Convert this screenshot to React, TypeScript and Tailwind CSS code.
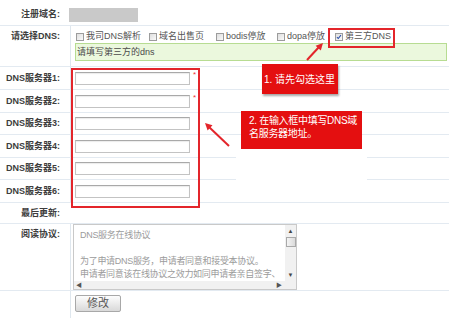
import type { ReactNode } from 'react';

const SEP = 'border-b border-[#e3eaf1]';

function Label({ children, className = '' }: { children: ReactNode; className?: string }) {
  return (
    <div className={`w-[70px] shrink-0 pr-[10px] text-right font-bold leading-[13px] text-[#3d3d3d] ${className}`}>
      {children}
    </div>
  );
}

function Checkbox({ checked = false }: { checked?: boolean }) {
  return (
    <span className="relative mr-[2px] inline-block h-[8px] w-[8px] shrink-0 border border-[#9c9c9c] bg-gradient-to-br from-[#dedede] to-[#fafafa]">
      {checked && (
        <svg viewBox="0 0 8 8" className="absolute left-0 top-0 h-[6px] w-[6px]">
          <path d="M1.2 4.2 L3 6 L6.6 1.6" fill="none" stroke="#2a4fa8" strokeWidth="1.4" />
        </svg>
      )}
    </span>
  );
}

const options = [
  { text: '我司DNS解析', w: 'w-[73px]' },
  { text: '域名出售页', w: 'w-[67px]' },
  { text: 'bodis停放', w: 'w-[61px]' },
  { text: 'dopa停放', w: 'w-[58px]' },
  { text: '第三方DNS', w: 'w-[60px]', checked: true },
];

const dnsRows = [
  { n: 1, h: 'h-[23px]', required: true },
  { n: 2, h: 'h-[23px]', required: true },
  { n: 3, h: 'h-[22px]' },
  { n: 4, h: 'h-[23px]' },
  { n: 5, h: 'h-[22px]' },
  { n: 6, h: 'h-[23px]' },
];

export default function App() {
  return (
    <div className="relative h-[330px] w-[468px] overflow-hidden bg-white font-['Liberation_Sans','Noto_Sans_CJK_SC',sans-serif] text-[9px] text-[#555]">
      <div className="w-[449px]">
        {/* 注册域名 */}
        <div className={`flex h-[26px] ${SEP}`}>
          <Label className="pt-[8px]">注册域名:</Label>
          <div className="pt-[8px]">
            <div className="-ml-px h-[14px] w-[69px] bg-[#c9c9c9]" />
          </div>
        </div>

        {/* 请选择DNS */}
        <div className={`flex h-[41px] ${SEP}`}>
          <Label className="pt-[4px]">请选择DNS:</Label>
          <div className="flex-1 border-l border-[#dfe7ee] pl-[4px] pr-[2px] pt-[4px]">
            <div className="flex h-[13px] items-center pl-[1px]">
              {options.map((o) => (
                <div key={o.text} className={`flex items-center ${o.w}`}>
                  <Checkbox checked={o.checked} />
                  <span className="whitespace-nowrap">{o.text}</span>
                </div>
              ))}
            </div>
            <div className="h-[18px] border border-[#b7dc92] bg-[#ebf8dd] pl-[1px] leading-[16px] text-[#4a4a4a]">
              请填写第三方的dns
            </div>
          </div>
        </div>

        {/* DNS服务器 */}
        {dnsRows.map((r) => (
          <div key={r.n} className={`flex items-center ${r.h} ${SEP}`}>
            <Label>DNS服务器{r.n}:</Label>
            <div className="flex h-full flex-1 items-center border-l border-[#dfe7ee] pl-[4px]">
              <div className="h-[13px] w-[115px] border border-[#c3c3c3] border-t-[#a9a9a9] bg-white shadow-[inset_0_1px_1px_rgba(0,0,0,0.08)]" />
              {r.required && <span className="mb-[6px] ml-[3px] text-[8px] text-[#e33]">*</span>}
            </div>
          </div>
        ))}

        {/* 最后更新 */}
        <div className={`flex h-[21px] items-center ${SEP}`}>
          <Label>最后更新:</Label>
        </div>

        {/* 阅读协议 */}
        <div className={`flex h-[67px] ${SEP}`}>
          <Label className="pt-[4px]">阅读协议:</Label>
          <div className="flex-1 border-l border-[#dfe7ee] pl-[2px]">
            <div className="relative h-[66px] w-[224px] overflow-hidden border border-[#c9c9c9] bg-white">
              <div className="w-[210px] overflow-hidden whitespace-nowrap pl-[6px] pt-[4px] leading-[13px] tracking-[-0.3px] text-[#9b9b9b]">
                <div>DNS服务在线协议</div>
                <div>&nbsp;</div>
                <div>为了申请DNS服务，申请者同意和接受本协议。</div>
                <div>申请者同意该在线协议之效力如同申请者亲自签字、</div>
              </div>
              {/* vertical scrollbar */}
              <div className="absolute bottom-[8px] right-0 top-0 flex w-[11px] flex-col items-center bg-[#f1f1f1]">
                <span className="mt-[3px] text-[6px] leading-[6px] text-[#444]">▲</span>
                <div className="mt-[3px] h-[10px] w-[10px] border border-[#a9a9a9] bg-gradient-to-r from-[#f4f4f4] to-[#dadada]" />
                <span className="mt-auto mb-[3px] text-[6px] leading-[6px] text-[#444]">▼</span>
              </div>
              {/* horizontal scrollbar */}
              <div className="absolute bottom-0 left-0 right-0 flex h-[8px] items-center justify-between bg-[#f1f1f1] pl-[2px] pr-[14px] text-[6px] leading-[6px] text-[#555]">
                <span>◀</span>
                <span>▶</span>
              </div>
            </div>
          </div>
        </div>

        {/* 修改 */}
        <div className="flex h-[27px]">
          <Label />
          <div className="flex-1 border-l border-[#dfe7ee] pl-[4px] pt-[4px]">
            <button
              type="button"
              className="h-[17px] w-[46px] rounded-[2px] border border-[#a8a8a8] bg-gradient-to-b from-[#fdfdfd] to-[#d9d9d9] text-[11px] leading-none text-[#555]"
            >
              修改
            </button>
          </div>
        </div>
      </div>

      {/* annotations */}
      <div className="absolute left-[71px] top-[68px] h-[140px] w-[129px] border-2 border-[#e3252b]" />
      <div className="absolute left-[328px] top-[28px] h-[20px] w-[67px] border-2 border-[#e3252b]" />
      <div className="absolute left-[236px] top-[150px] h-[31px] w-[131px] bg-white" />

      <div className="absolute left-[262px] top-[64px] flex h-[30px] w-[76px] items-center bg-[#e40f10] pl-[2px] text-[10px] text-white shadow-[1px_2px_2px_rgba(0,0,0,0.35)]">
        1. 请先勾选这里
      </div>
      <div className="absolute left-[241px] top-[111px] h-[38px] w-[121px] bg-[#e40f10] pl-[8px] pt-[3px] text-[10px] leading-[13px] tracking-[-0.3px] text-white">
        <div className="whitespace-nowrap">2. 在输入框中填写DNS域</div>
        <div>名服务器地址。</div>
      </div>

      <svg className="pointer-events-none absolute left-0 top-0" width="468" height="330">
        <line x1="307" y1="60" x2="319" y2="47" stroke="#e3252b" strokeWidth="2" />
        <polygon points="323,43 320.8,50.5 315.6,45.7" fill="#e3252b" />
        <line x1="229" y1="146" x2="209" y2="127" stroke="#e3252b" strokeWidth="2" />
        <polygon points="205,123 212.5,125.3 207.6,130.4" fill="#e3252b" />
      </svg>
    </div>
  );
}
